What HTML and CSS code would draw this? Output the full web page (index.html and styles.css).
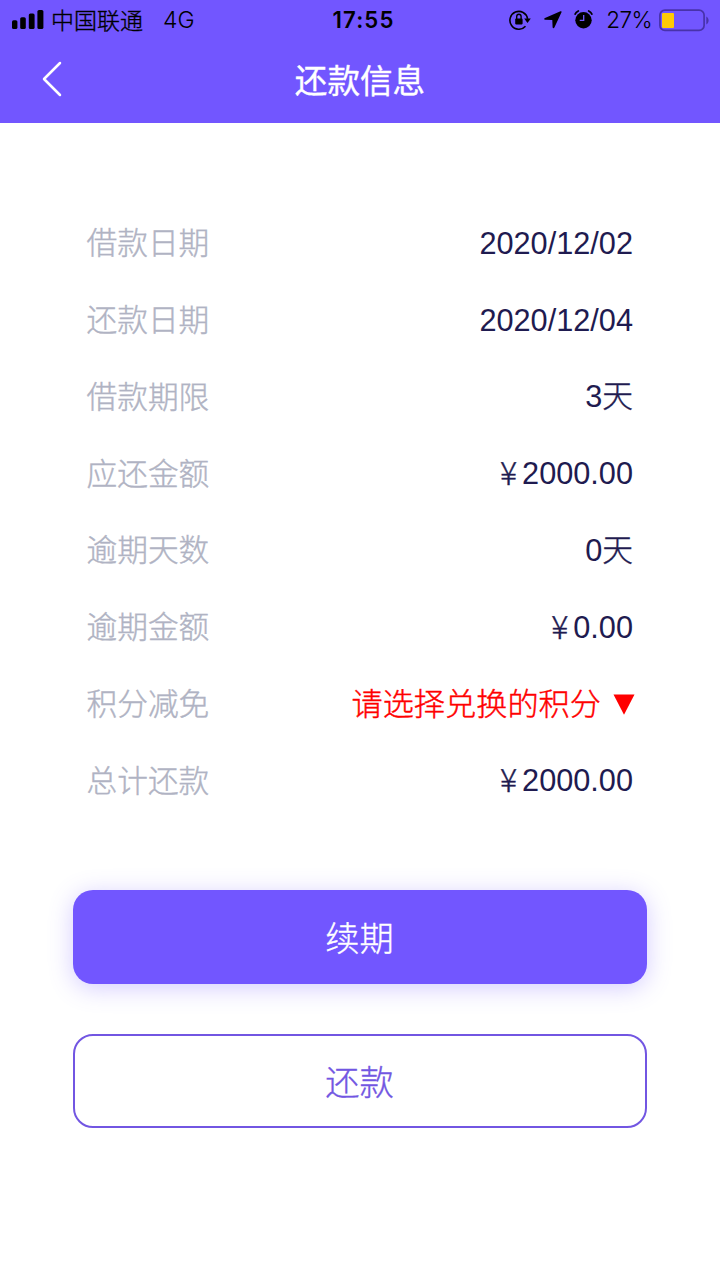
FILE: index.html
```html
<!DOCTYPE html>
<html lang="zh-CN">
<head>
<meta charset="utf-8">
<title>还款信息</title>
<link rel="stylesheet" href="styles.css">
</head>
<body>
<div class="page">
  <header class="header">
    <div class="status">
      <div class="status-left">
        <svg class="signal" width="32" height="20" viewBox="0 0 32 20"><rect x="0" y="10.2" width="5.4" height="8.8" rx="1.6"/><rect x="8.2" y="7.2" width="5.6" height="11.8" rx="1.6"/><rect x="16.8" y="3.4" width="5.8" height="15.600" rx="1.6"/><rect x="25.400" y="0" width="6" height="19" rx="1.6"/></svg>
        <span class="carrier">中国联通</span>
        <span class="network">4G</span>
      </div>
      <div class="time">17:55</div>
      <div class="status-right">
        <svg class="lock" width="22" height="20" viewBox="0 0 22 20"><path d="M16.500 16.200A8.900 8.900 0 1 1 18.600 8.800" fill="none" stroke="#000" stroke-width="1.6"/><path d="M15.200 8.600h6.600l-3.300 4.300z"/><rect x="6.2" y="8.600" width="7.4" height="5.800" rx=".8"/><path d="M7.7 9V6.500a2.200 2.200 0 0 1 4.400 0V9" fill="none" stroke="#000" stroke-width="1.4"/></svg>
        <svg class="location" width="18" height="18" viewBox="0 0 18 18"><path d="M16.500.3 1 7.100C-.3 7.700 0 8.600 1.100 8.700L8.300 9.100 8.600 16.300C8.700 17.600 9.900 17.700 10.400 16.600L17.500 1.300C17.900.400 17.300 0 16.500.300z"/></svg>
        <svg class="alarm" width="19" height="19" viewBox="0 0 19 19"><circle cx="9.500" cy="10.200" r="8.200"/><path d="M1.100 4.100Q2 2.200 4.300 1M17.900 4.100Q17 2.200 14.700 1" fill="none" stroke="#000" stroke-width="1.700" stroke-linecap="round"/><path d="M9.700 5v5.300H5.700" fill="none" stroke="#7256ff" stroke-width="1.300"/></svg>
        <span class="percent">27%</span>
        <svg class="battery" width="50" height="23" viewBox="0 0 50 23"><rect x=".9" y="1.100" width="44.200" height="20.300" rx="5" fill="none" stroke="#4832aa" stroke-width="1.700"/><rect x="3" y="4" width="12" height="15" rx="1" fill="#ffcb05"/><path d="M47.300 7.500c3 1.500 3 6.500 0 8z" fill="#4832aa"/></svg>
      </div>
    </div>
    <nav class="nav">
      <svg class="back" width="22" height="36" viewBox="0 0 22 36"><path d="M19 2 3 18 19 34" fill="none" stroke="#fff" stroke-width="2.500" stroke-linecap="round" stroke-linejoin="round"/></svg>
      <h1 class="title">还款信息</h1>
    </nav>
  </header>
  <main>
    <dl class="list">
      <div class="row"><dt>借款日期</dt><dd>2020/12/02</dd></div>
      <div class="row"><dt>还款日期</dt><dd>2020/12/04</dd></div>
      <div class="row"><dt>借款期限</dt><dd>3<span class="unit">天</span></dd></div>
      <div class="row"><dt>应还金额</dt><dd><span class="yen">¥</span>2000.00</dd></div>
      <div class="row"><dt>逾期天数</dt><dd>0<span class="unit">天</span></dd></div>
      <div class="row"><dt>逾期金额</dt><dd><span class="yen">¥</span>0.00</dd></div>
      <div class="row"><dt>积分减免</dt><dd class="select">请选择兑换的积分<svg class="caret" width="22" height="21" viewBox="0 0 22 21"><path d="M.5.500h21L11 20.800z" fill="#f00"/></svg></dd></div>
      <div class="row"><dt>总计还款</dt><dd><span class="yen">¥</span>2000.00</dd></div>
    </dl>
    <div class="actions">
      <button class="button button-primary">续期</button>
      <button class="button button-outline">还款</button>
    </div>
  </main>
</div>
</body>
</html>
```
FILE: styles.css
```css
* { box-sizing: border-box; }
body {
  margin: 0;
  background: #fff;
  font-family: "Liberation Sans", "Noto Sans CJK SC", sans-serif;
}
.page { width: 720px; height: 1280px; overflow: hidden; }
.header { height: 123px; background: #7256ff; }
.status {
  display: grid;
  grid-template-columns: 1fr auto 1fr;
  height: 40px;
  padding: 0 11px 0 12px;
  align-items: center;
  font-family: Inter, "Noto Sans CJK SC", sans-serif;
  font-size: 23px;
  line-height: 40px;
  color: #000;
}
.status-left, .status-right { display: flex; align-items: center; height: 40px; }
.status-right { justify-content: flex-end; }
.carrier {
  margin-left: 7px;
  padding-bottom: 2px;
  font-family: "Noto Sans CJK SC", sans-serif;
  font-weight: 300;
  -webkit-text-stroke: .35px currentColor;
}
.network { margin-left: 20px; font-size: 23px; font-weight: 300; }
.time { padding-left: 6px; font-weight: 600; font-size: 22.2px; letter-spacing: 1.1px; }
.lock { margin-right: 13px; }
.location { margin-right: 12px; }
.alarm { margin: 0 13px 2px 0; }
.percent { margin-right: 7px; font-size: 22.5px; font-weight: 300; letter-spacing: -.6px; }
.nav {
  display: grid;
  grid-template-columns: 80px 1fr 80px;
  align-items: center;
  height: 80px;
}
.back { margin: 0 0 4px 41px; }
.title {
  margin: 0;
  padding-top: 2px;
  text-align: center;
  font-size: 32.6px;
  line-height: 80px;
  font-weight: 400;
  color: #fff;
  -webkit-text-stroke: .35px currentColor;
}
.list { margin: 0; padding: 82px 87px 0 86.5px; }
.row {
  display: flex;
  justify-content: space-between;
  align-items: center;
  height: 76.75px;
  font-size: 30.7px;
  line-height: 44px;
}
.row dt {
  padding-top: 2px;
  color: #b0b3c3;
  font-weight: 300;
  -webkit-text-stroke: .4px currentColor;
}
.row dd { display: flex; align-items: center; margin: 0; padding-top: 1px; color: #1f1b50; }
.unit { font-weight: 300; -webkit-text-stroke: .4px currentColor; }
.yen {
  margin-right: 5px;
  padding-bottom: 6px;
  font-family: "Noto Sans CJK SC", sans-serif;
  font-size: 32px;
  font-weight: 300;
  -webkit-text-stroke: .4px currentColor;
}
.row .select {
  margin-right: -2px;
  padding-top: 2px;
  color: #f00;
  font-size: 31.2px;
  font-weight: 300;
  -webkit-text-stroke: .4px currentColor;
}
.caret { margin: 0 0 1px 12px; }
.actions { display: grid; gap: 50px; padding: 71px 73px 0; }
.button {
  height: 94px;
  padding: 0 1px 2px 0;
  border: 0;
  border-radius: 20px;
  font-family: "Noto Sans CJK SC", sans-serif;
  font-size: 34.2px;
  font-weight: 300;
  -webkit-text-stroke: .35px currentColor;
}
.button-primary {
  background: #7256ff;
  color: #fff;
  box-shadow: 0 4px 24px rgba(114, 86, 255, .3);
}
.button-outline { border: 2px solid #7256e2; background: #fff; color: #7256e2; }
```
